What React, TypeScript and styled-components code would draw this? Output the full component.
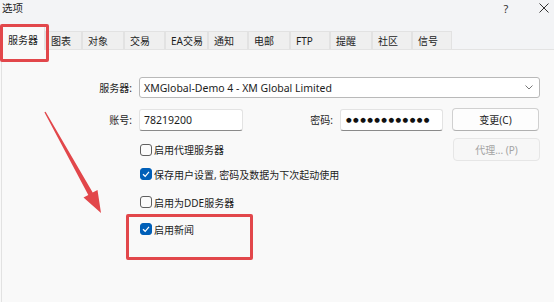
import styled, { createGlobalStyle } from "styled-components";

const GlobalStyle = createGlobalStyle`
  html, body {
    margin: 0;
    padding: 0;
  }
  body {
    width: 554px;
    height: 302px;
    overflow: hidden;
    background: #f9f9f9;
    font-family: "Noto Sans", "Noto Sans CJK SC", sans-serif;
    font-size: 10px;
    color: #1c1c1c;
  }
`;

const Window = styled.div`
  position: relative;
  width: 554px;
  height: 302px;
  display: flex;
  flex-direction: column;
  background: #f9f9f9;
`;

const Header = styled.div`
  background: #f3f4f6;
  display: flex;
  flex-direction: column;
`;

const TitleBar = styled.div`
  height: 24px;
  display: flex;
  align-items: flex-start;
  padding: 1px 0 0 2px;
  box-sizing: border-box;
  font-size: 10.5px;
`;

const Title = styled.span`
  flex: 1;
  line-height: 14px;
`;

const TitleButton = styled.span<{ $w: number; $mr?: number }>`
  width: ${(p) => p.$w}px;
  margin-right: ${(p) => p.$mr || 0}px;
  height: 14px;
  display: flex;
  align-items: center;
  justify-content: center;
  font-size: 11px;
  color: #333;
`;

const TabRow = styled.div`
  height: 25px;
  display: flex;
  align-items: flex-end;
  padding-left: 2px;
  border-bottom: 1px solid #e3e3e3;
`;

const Tab = styled.div<{ $w: number; $active?: boolean }>`
  width: ${(p) => p.$w}px;
  height: ${(p) => (p.$active ? 25 : 18)}px;
  box-sizing: border-box;
  padding: ${(p) => (p.$active ? "6px 0 0 5px" : "0 0 0 5px")};
  display: flex;
  align-items: ${(p) => (p.$active ? "flex-start" : "center")};
  background: ${(p) => (p.$active ? "#f9f9f9" : "#efefef")};
  border: 1px solid #e2e2e2;
  border-bottom: none;
  margin-bottom: ${(p) => (p.$active ? -1 : 0)}px;
  white-space: nowrap;
`;

const Panel = styled.div`
  flex: 1;
  border-left: 1px solid #e2e2e2;
  margin-left: 1px;
  padding: 27px 14px 0 0;
  display: flex;
  flex-direction: column;
`;

const Row = styled.div<{ $mt: number }>`
  display: flex;
  align-items: center;
  margin-top: ${(p) => p.$mt}px;
`;

const Label = styled.span<{ $w: number; $ml?: number }>`
  width: ${(p) => p.$w}px;
  margin-left: ${(p) => p.$ml || 0}px;
  margin-right: 7px;
  text-align: right;
  white-space: nowrap;
`;

const Select = styled.div`
  flex: 1;
  height: 21px;
  box-sizing: border-box;
  border: 1px solid #b9b9b9;
  border-radius: 3px;
  background: #fff;
  display: flex;
  align-items: center;
  padding: 0 6px 0 4px;
  font-size: 10.5px;
`;

const SelectText = styled.span`
  flex: 1;
`;

const Input = styled.div<{ $w: number }>`
  width: ${(p) => p.$w}px;
  height: 22px;
  box-sizing: border-box;
  border: 1px solid #e3e3e3;
  border-bottom-color: #8a8a8a;
  border-radius: 3px;
  background: #fff;
  display: flex;
  align-items: center;
  padding-left: 4px;
  font-size: 10.5px;
  overflow: hidden;
`;

const Dots = styled.span`
  font-family: "DejaVu Sans", sans-serif;
  font-size: 6.5px;
  letter-spacing: 1.4px;
  padding-left: 1px;
  color: #111;
  white-space: nowrap;
`;

const Button = styled.div<{ $disabled?: boolean; $right?: boolean }>`
  width: 87px;
  height: 23px;
  margin-left: ${(p) => (p.$right ? "auto" : "9px")};
  box-sizing: border-box;
  border: 1px solid ${(p) => (p.$disabled ? "#e6e6e6" : "#d0d0d0")};
  border-bottom-color: ${(p) => (p.$disabled ? "#e6e6e6" : "#b0b0b0")};
  border-radius: 4px;
  background: ${(p) => (p.$disabled ? "#f7f7f7" : "#fdfdfd")};
  color: ${(p) => (p.$disabled ? "#a3a3a3" : "#1c1c1c")};
  display: flex;
  align-items: center;
  justify-content: center;
`;

const CheckRow = styled.div<{ $mt: number }>`
  display: flex;
  align-items: center;
  height: 22px;
  margin-top: ${(p) => p.$mt}px;
  padding-left: 138px;
`;

const Box = styled.span<{ $on?: boolean }>`
  width: 12px;
  height: 12px;
  box-sizing: border-box;
  border-radius: 3px;
  border: 1px solid ${(p) => (p.$on ? "#005fb8" : "#5f5f5f")};
  background: ${(p) => (p.$on ? "#005fb8" : "#fbfbfb")};
  display: flex;
  align-items: center;
  justify-content: center;
  margin-right: 2px;
`;

const Highlight = styled.div<{ $x: number; $y: number; $w: number; $h: number }>`
  position: absolute;
  left: ${(p) => p.$x}px;
  top: ${(p) => p.$y}px;
  width: ${(p) => p.$w}px;
  height: ${(p) => p.$h}px;
  box-sizing: border-box;
  border: 3px solid #e2474b;
  border-radius: 2px;
`;

const Arrow = styled.svg`
  position: absolute;
  left: 0;
  top: 0;
  pointer-events: none;
`;

const tabs = [
  { t: "服务器", w: 43 },
  { t: "图表", w: 37 },
  { t: "对象", w: 42 },
  { t: "交易", w: 41 },
  { t: "EA交易", w: 43 },
  { t: "通知", w: 40 },
  { t: "电邮", w: 42 },
  { t: "FTP", w: 40 },
  { t: "提醒", w: 42 },
  { t: "社区", w: 40 },
  { t: "信号", w: 40 },
];

const Check = ({ on }: { on?: boolean }) => (
  <Box $on={on}>
    {on && (
      <svg width="10" height="10" viewBox="0 0 10 10">
        <path d="M2 5.2 L4.2 7.3 L8 2.8" fill="none" stroke="#fff" strokeWidth="1.2" />
      </svg>
    )}
  </Box>
);

export default function App() {
  return (
    <Window>
      <GlobalStyle />
      <Header>
        <TitleBar>
          <Title>选项</Title>
          <TitleButton $w={14} $mr={21}>?</TitleButton>
          <TitleButton $w={20}>
            <svg width="10" height="10" viewBox="0 0 10 10">
              <path d="M0.5 0.5 L9.5 9.5 M9.5 0.5 L0.5 9.5" stroke="#333" strokeWidth="1" />
            </svg>
          </TitleButton>
        </TitleBar>
        <TabRow>
          {tabs.map((tab, i) => (
            <Tab key={tab.t} $w={tab.w} $active={i === 0}>
              {tab.t}
            </Tab>
          ))}
        </TabRow>
      </Header>
      <Panel>
        <Row $mt={0}>
          <Label $w={130}>服务器:</Label>
          <Select>
            <SelectText>XMGlobal-Demo 4 - XM Global Limited</SelectText>
            <svg width="8" height="5" viewBox="0 0 8 5">
              <path d="M0.5 0.5 L4 4 L7.5 0.5" fill="none" stroke="#777" strokeWidth="1" />
            </svg>
          </Select>
        </Row>
        <Row $mt={10}>
          <Label $w={130}>账号:</Label>
          <Input $w={104}>78219200</Input>
          <Label $w={26} $ml={64}>密码:</Label>
          <Input $w={103}>
            <Dots>●●●●●●●●●●●●</Dots>
          </Input>
          <Button>变更(C)</Button>
        </Row>
        <Row $mt={7}>
          <CheckRow $mt={0}>
            <Check />
            启用代理服务器
          </CheckRow>
          <Button $disabled $right>
            代理... (P)
          </Button>
        </Row>
        <CheckRow $mt={2}>
          <Check on />
          保存用户设置, 密码及数据为下次起动使用
        </CheckRow>
        <CheckRow $mt={6}>
          <Check />
          启用为DDE服务器
        </CheckRow>
        <CheckRow $mt={5}>
          <Check on />
          启用新闻
        </CheckRow>
      </Panel>
      <Highlight $x={0} $y={24} $w={49} $h={38} />
      <Highlight $x={126} $y={214} $w={127} $h={46} />
      <Arrow width="554" height="302" viewBox="0 0 554 302">
        <polygon
          points="44.4,112.3 88.3,194.9 83.5,197.5 101,213 97.5,189.9 92.7,192.5 45.6,111.7"
          fill="#e2474b"
        />
      </Arrow>
    </Window>
  );
}
